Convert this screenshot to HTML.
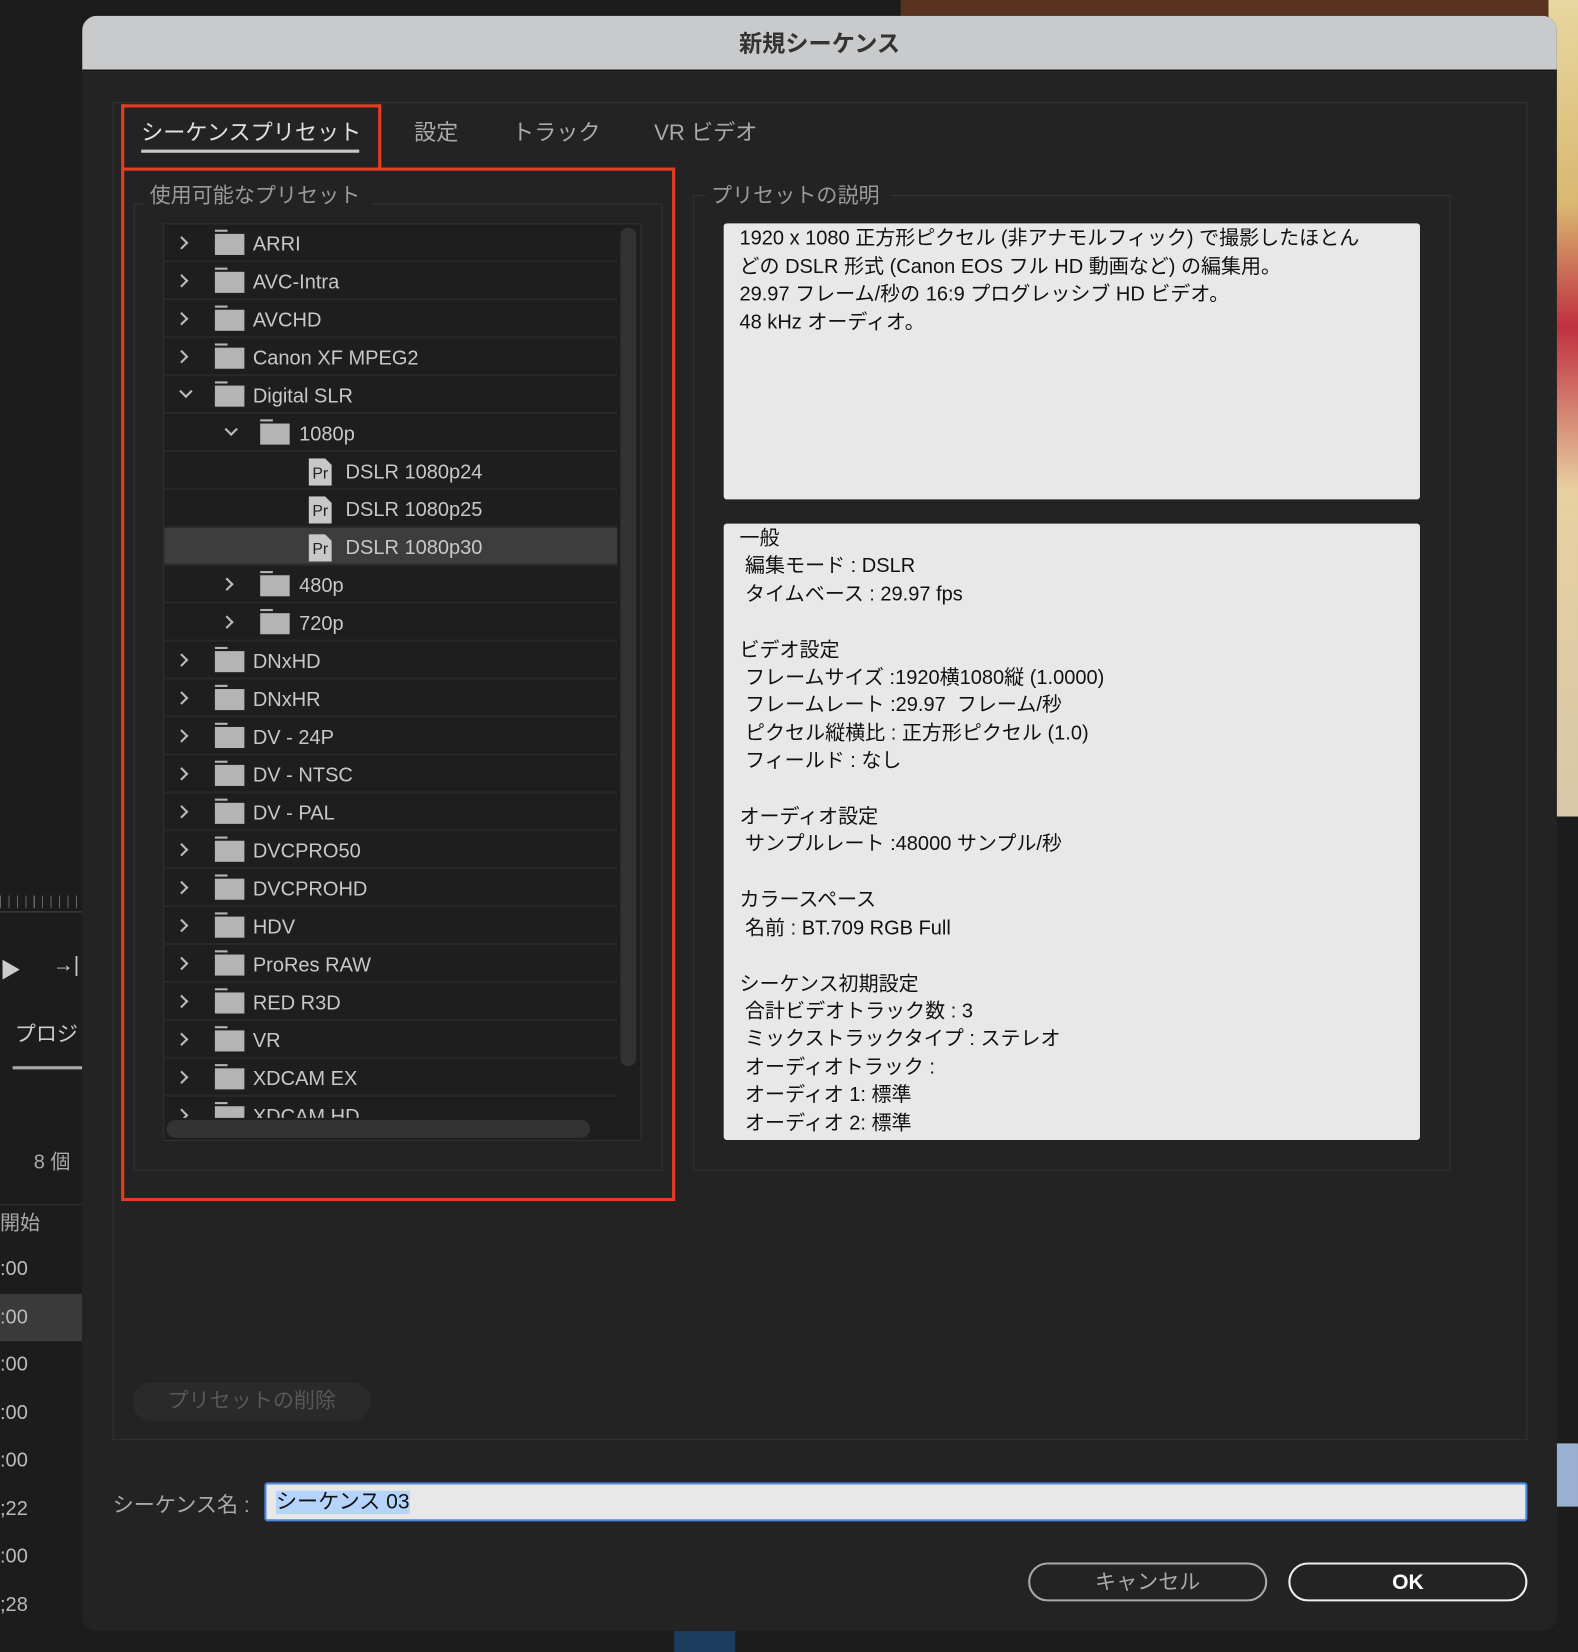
<!DOCTYPE html>
<html><head><meta charset="utf-8"><style>
*{margin:0;padding:0;box-sizing:border-box}
html,body{width:1578px;height:1652px;overflow:hidden;background:#1a1a1a}
body{font-family:"Liberation Sans","Noto Sans CJK JP",sans-serif}
#s{position:absolute;left:0;top:0;width:1498px;height:1568px;transform:scale(1.05340,1.05357);transform-origin:0 0;background:#1c1c1c}
.a{position:absolute}
.dlg{left:78px;top:15px;width:1400px;height:1533px;background:#232323;border-radius:14px;overflow:hidden}
.tb{left:0;top:0;width:1400px;height:53px;background:#c9cacc;border-bottom:2px solid #111;text-align:center;font-weight:bold;font-size:22px;color:#333;line-height:54px}
.row{position:absolute;left:0;width:430px;height:36px;border-bottom:2px solid #282828;color:#c8c8c8;font-size:19px;line-height:36px}
.row span{position:absolute;top:2px}
.chev{position:absolute;width:9px;height:9px;border-right:2px solid #bbb;border-top:2px solid #bbb;transform:rotate(45deg);top:13px}
.down{transform:rotate(135deg);top:10px}
.fold{position:absolute;top:9px;width:28px;height:20px;background:#b4b4b4}
.fold:before{content:"";position:absolute;left:0;top:-4px;width:12px;height:2px;background:#b4b4b4}
.pr{position:absolute;top:6px;width:22px;height:26px;background:#c8c8c8;color:#222;font-size:15px;line-height:30px;text-align:center;font-style:normal;clip-path:polygon(0 0,70% 0,100% 25%,100% 100%,0 100%)}
.box{background:#e8e8e8;border-radius:3px;color:#111;font-size:19px;line-height:26.5px;padding:0 15px}
.legend{font-size:20px;color:#9a9a9a;background:#232323;padding:0 10px 0 5px}
</style></head><body><div id="s">
<div class="a" style="left:855px;top:0;width:643px;height:20px;background:#5a3320"></div>
<div class="a" style="left:1470px;top:0;width:28px;height:775px;background:linear-gradient(#e8d7a0,#d9b870 25%,#c03040 40%,#e8d0a0 60%,#d8c8a8)"></div>
<div class="a" style="left:1470px;top:1370px;width:28px;height:60px;background:#9ab0d0"></div>
<div class="a" style="left:0;top:850px;width:78px;height:12px;background:repeating-linear-gradient(90deg,#666 0 1px,transparent 1px 8px)"></div>
<div class="a" style="left:0;top:865px;width:78px;height:20px;border-top:1px solid #444"></div>
<div class="a" style="left:0;top:905px;color:#ccc;font-size:20px">▶</div>
<div class="a" style="left:50px;top:905px;color:#ccc;font-size:20px">→|</div>
<div class="a" style="left:0;top:965px;width:78px;color:#ccc;font-size:20px;padding-left:14px">プロジ</div>
<div class="a" style="left:12px;top:1012px;width:66px;height:3px;background:#aaa"></div>
<div class="a" style="left:32px;top:1088px;color:#aaa;font-size:19px">8 個</div>
<div class="a" style="left:0;top:1143px;width:78px;height:36px;color:#aaa;font-size:19px;line-height:36px;border-top:1px solid #333">開始</div>
<div class="a" style="left:0;top:1182px;width:78px;color:#bbb;font-size:19px;line-height:45.5px">:00<br><span style="display:block;background:#3a3a3a">:00</span>:00<br>:00<br>:00<br>;22<br>:00<br>;28</div>
<div class="a" style="left:640px;top:1548px;width:58px;height:20px;background:#1d3d60"></div>

<div class="a dlg">
 <div class="a tb">新規シーケンス</div>
 <div class="a" style="left:29px;top:82px;width:1343px;height:1270px;border:1px solid #333"></div>
 <div class="a" style="left:37px;top:84px;width:247px;height:61px;border:3px solid #e53d22;border-bottom:none"></div>
 <div class="a" style="left:56px;top:95px;font-size:21px;color:#e0e0e0">シーケンスプリセット</div>
 <div class="a" style="left:56px;top:127px;width:207px;height:3px;background:#c8c8c8"></div>
 <div class="a" style="left:315px;top:95px;font-size:21px;color:#aaa">設定</div>
 <div class="a" style="left:408px;top:95px;font-size:21px;color:#aaa">トラック</div>
 <div class="a" style="left:543px;top:95px;font-size:21px;color:#aaa">VR ビデオ</div>
 <div class="a" style="left:37px;top:144px;width:526px;height:981px;border:3px solid #e53d22"></div>
 <div class="a" style="left:49px;top:178px;width:502px;height:918px;border:1px solid #333"></div>
 <div class="a legend" style="left:59px;top:154px">使用可能なプリセット</div>
 <div class="a" style="left:77px;top:197px;width:454px;height:871px;background:#1e1e1e;border:1px solid #333;overflow:hidden">
  <div class="a" style="left:433px;top:3px;width:15px;height:796px;background:#333;border-radius:8px"></div>
  <div class="a" style="left:2px;top:850px;width:402px;height:17px;background:#333;border-radius:9px"></div>
  <div class="row" style="top:0"><i class="chev" style="left:12px"></i><i class="fold" style="left:48px"></i><span style="left:84px">ARRI</span></div>
  <div class="row" style="top:36px"><i class="chev" style="left:12px"></i><i class="fold" style="left:48px"></i><span style="left:84px">AVC-Intra</span></div>
  <div class="row" style="top:72px"><i class="chev" style="left:12px"></i><i class="fold" style="left:48px"></i><span style="left:84px">AVCHD</span></div>
  <div class="row" style="top:108px"><i class="chev" style="left:12px"></i><i class="fold" style="left:48px"></i><span style="left:84px">Canon XF MPEG2</span></div>
  <div class="row" style="top:144px"><i class="chev down" style="left:16px"></i><i class="fold" style="left:48px"></i><span style="left:84px">Digital SLR</span></div>
  <div class="row" style="top:180px"><i class="chev down" style="left:59px"></i><i class="fold" style="left:91px"></i><span style="left:128px">1080p</span></div>
  <div class="row" style="top:216px"><i class="pr" style="left:137px">Pr</i><span style="left:172px">DSLR 1080p24</span></div>
  <div class="row" style="top:252px"><i class="pr" style="left:137px">Pr</i><span style="left:172px">DSLR 1080p25</span></div>
  <div class="row" style="top:288px;background:#3d3d3d"><i class="pr" style="left:137px">Pr</i><span style="left:172px">DSLR 1080p30</span></div>
  <div class="row" style="top:324px"><i class="chev" style="left:55px"></i><i class="fold" style="left:91px"></i><span style="left:128px">480p</span></div>
  <div class="row" style="top:360px"><i class="chev" style="left:55px"></i><i class="fold" style="left:91px"></i><span style="left:128px">720p</span></div>
  <div class="row" style="top:396px"><i class="chev" style="left:12px"></i><i class="fold" style="left:48px"></i><span style="left:84px">DNxHD</span></div>
  <div class="row" style="top:432px"><i class="chev" style="left:12px"></i><i class="fold" style="left:48px"></i><span style="left:84px">DNxHR</span></div>
  <div class="row" style="top:468px"><i class="chev" style="left:12px"></i><i class="fold" style="left:48px"></i><span style="left:84px">DV - 24P</span></div>
  <div class="row" style="top:504px"><i class="chev" style="left:12px"></i><i class="fold" style="left:48px"></i><span style="left:84px">DV - NTSC</span></div>
  <div class="row" style="top:540px"><i class="chev" style="left:12px"></i><i class="fold" style="left:48px"></i><span style="left:84px">DV - PAL</span></div>
  <div class="row" style="top:576px"><i class="chev" style="left:12px"></i><i class="fold" style="left:48px"></i><span style="left:84px">DVCPRO50</span></div>
  <div class="row" style="top:612px"><i class="chev" style="left:12px"></i><i class="fold" style="left:48px"></i><span style="left:84px">DVCPROHD</span></div>
  <div class="row" style="top:648px"><i class="chev" style="left:12px"></i><i class="fold" style="left:48px"></i><span style="left:84px">HDV</span></div>
  <div class="row" style="top:684px"><i class="chev" style="left:12px"></i><i class="fold" style="left:48px"></i><span style="left:84px">ProRes RAW</span></div>
  <div class="row" style="top:720px"><i class="chev" style="left:12px"></i><i class="fold" style="left:48px"></i><span style="left:84px">RED R3D</span></div>
  <div class="row" style="top:756px"><i class="chev" style="left:12px"></i><i class="fold" style="left:48px"></i><span style="left:84px">VR</span></div>
  <div class="row" style="top:792px"><i class="chev" style="left:12px"></i><i class="fold" style="left:48px"></i><span style="left:84px">XDCAM EX</span></div>
  <div class="row" style="top:828px;height:20px;overflow:hidden;border:none"><i class="chev" style="left:12px"></i><i class="fold" style="left:48px"></i><span style="left:84px">XDCAM HD</span></div>
 </div>
 <div class="a" style="left:580px;top:170px;width:719px;height:926px;border:1px solid #333"></div>
 <div class="a legend" style="left:592px;top:154px">プリセットの説明</div>
 <div class="a box" style="left:609px;top:197px;width:661px;height:262px;padding-top:2px">1920 x 1080 正方形ピクセル (非アナモルフィック) で撮影したほとん<br>どの DSLR 形式 (Canon EOS フル HD 動画など) の編集用。<br>29.97 フレーム/秒の 16:9 プログレッシブ HD ビデオ。<br>48 kHz オーディオ。</div>
 <div class="a box" style="left:609px;top:482px;width:661px;height:585px;overflow:hidden;white-space:pre;line-height:26.4px;padding-top:2px">一般
 編集モード : DSLR
 タイムベース : 29.97 fps

ビデオ設定
 フレームサイズ :1920横1080縦 (1.0000)
 フレームレート :29.97  フレーム/秒
 ピクセル縦横比 : 正方形ピクセル (1.0)
 フィールド : なし

オーディオ設定
 サンプルレート :48000 サンプル/秒

カラースペース
 名前 : BT.709 RGB Full

シーケンス初期設定
 合計ビデオトラック数 : 3
 ミックストラックタイプ : ステレオ
 オーディオトラック :
 オーディオ 1: 標準
 オーディオ 2: 標準</div>
 <div class="a" style="left:48px;top:1297px;width:226px;height:37px;background:#2a2a2a;border-radius:18px;color:#575757;font-size:20px;line-height:37px;text-align:center">プリセットの削除</div>
 <div class="a" style="left:29px;top:1397px;font-size:20px;color:#aaa">シーケンス名 :</div>
 <div class="a" style="left:173px;top:1392px;width:1199px;height:37px;background:#e8e8e8;border:2px solid #4a88e0;border-radius:3px;font-size:20px;line-height:35px;padding-left:9px;color:#111"><span style="background:#b4d4fb">シーケンス 03</span></div>
 <div class="a" style="left:898px;top:1468px;width:227px;height:37px;border:2px solid #a8a8a8;border-radius:19px;color:#aaa;font-size:20px;line-height:35px;text-align:center">キャンセル</div>
 <div class="a" style="left:1145px;top:1468px;width:227px;height:37px;border:2px solid #eee;border-radius:19px;color:#fff;font-size:20px;line-height:35px;text-align:center;font-weight:bold">OK</div>
</div>
</div></body></html>
